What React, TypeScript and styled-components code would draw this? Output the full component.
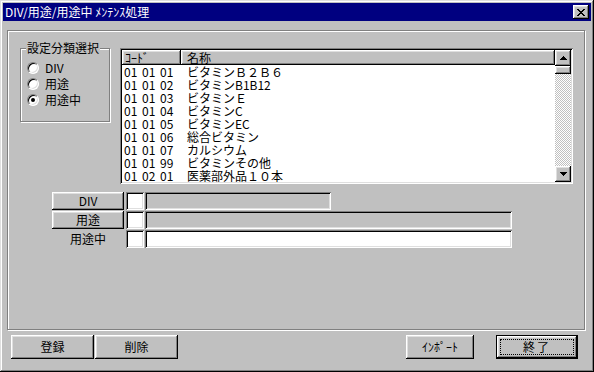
import React from "react";
import styled, { createGlobalStyle, css } from "styled-components";

const Global = createGlobalStyle`
  html, body { margin: 0; padding: 0; background: #c0c0c0; }
  body {
    font-family: "Noto Sans CJK JP", "Noto Sans", sans-serif;
    font-size: 12px;
    color: #000;
  }
  * { box-sizing: border-box; }
`;

const raised = css`
  background: #c0c0c0;
  box-shadow: inset -1px -1px #000, inset 1px 1px #fff, inset -2px -2px #808080,
    inset 2px 2px #dfdfdf;
`;

const sunken = css`
  box-shadow: inset 1px 1px #808080, inset -1px -1px #fff, inset 2px 2px #000,
    inset -2px -2px #dfdfdf;
`;

const etched = css`
  border: 1px solid #808080;
  box-shadow: inset 1px 1px #fff, 1px 1px #fff;
`;

const Window = styled.div`
  width: 594px;
  height: 372px;
  padding: 3px;
  display: flex;
  flex-direction: column;
  background: #c0c0c0;
  box-shadow: inset -1px -1px #000, inset 1px 1px #dfdfdf, inset -2px -2px #808080,
    inset 2px 2px #fff;
`;

const TitleBar = styled.div`
  height: 18px;
  flex-shrink: 0;
  background: #000080;
  color: #fff;
  display: flex;
  align-items: center;
  justify-content: space-between;
  padding: 0 2px 0 2px;
`;

const TitleText = styled.span`
  font-size: 12px;
  line-height: 18px;
  white-space: pre;
`;

const CloseButton = styled.button`
  ${raised};
  width: 16px;
  height: 14px;
  border: 0;
  padding: 0;
  display: flex;
  align-items: center;
  justify-content: center;
`;

const Body = styled.div`
  flex: 1;
  display: flex;
  flex-direction: column;
  padding: 9px 6px 0 4px;
`;

const Panel = styled.div`
  ${etched};
  height: 300px;
  padding: 17px 10px 0 12px;
  display: flex;
  flex-direction: column;
`;

const TopRow = styled.div`
  display: flex;
  align-items: flex-start;
  gap: 10px;
`;

const Group = styled.div`
  ${etched};
  position: relative;
  width: 90px;
  height: 74px;
  padding: 12px 0 0 6px;
  display: flex;
  flex-direction: column;
  gap: 3px;
`;

const Legend = styled.span`
  position: absolute;
  top: -8px;
  left: 5px;
  padding: 0 1px;
  line-height: 14px;
  background: #c0c0c0;
  white-space: nowrap;
`;

const RadioRow = styled.label`
  display: flex;
  align-items: center;
  gap: 6px;
  height: 13px;
  line-height: 13px;
`;

const RadioDot = styled.span<{ $checked?: boolean }>`
  position: relative;
  flex-shrink: 0;
  width: 12px;
  height: 12px;
  border-radius: 50%;
  background: #fff;
  border: 1px solid;
  border-color: #808080 #fff #fff #808080;
  box-shadow: inset 1px 1px #000, inset -1px -1px #dfdfdf;
  ${(p) =>
    p.$checked &&
    css`
      &::after {
        content: "";
        position: absolute;
        left: 3px;
        top: 3px;
        width: 4px;
        height: 4px;
        border-radius: 50%;
        background: #000;
      }
    `}
`;

const ListView = styled.div`
  ${sunken};
  width: 453px;
  height: 136px;
  padding: 2px;
  background: #fff;
  display: flex;
`;

const ListContent = styled.div`
  flex: 1;
  display: flex;
  flex-direction: column;
`;

const HeaderRow = styled.div`
  display: grid;
  grid-template-columns: 59px 1fr;
  height: 15px;
  flex-shrink: 0;
`;

const HeaderCell = styled.div<{ $indent: number }>`
  ${raised};
  padding-left: ${(p) => p.$indent}px;
  line-height: 15px;
  white-space: nowrap;
`;

const DataRow = styled.div`
  display: grid;
  grid-template-columns: 59px 1fr;
  height: 13px;
  line-height: 13px;
  white-space: pre;
`;

const CodeCell = styled.span`
  padding-left: 2px;
  word-spacing: 2px;
`;

const NameCell = styled.span`
  padding-left: 6px;
`;

const ScrollBar = styled.div`
  width: 16px;
  display: flex;
  flex-direction: column;
`;

const ScrollButton = styled.div`
  ${raised};
  width: 16px;
  height: 16px;
  flex-shrink: 0;
  display: flex;
  align-items: center;
  justify-content: center;
`;

const Thumb = styled.div`
  ${raised};
  width: 16px;
  height: 8px;
  flex-shrink: 0;
`;

const Track = styled.div`
  flex: 1;
  background-color: #fff;
  background-image: repeating-conic-gradient(#c0c0c0 0% 25%, #fff 0% 50%);
  background-size: 2px 2px;
`;

const Fields = styled.div`
  margin: 8px 0 0 32px;
  display: flex;
  flex-direction: column;
  gap: 1px;
`;

const FieldRow = styled.div`
  display: flex;
  align-items: center;
  height: 18px;
`;

const FieldButton = styled.button`
  ${raised};
  width: 72px;
  height: 18px;
  border: 0;
  padding: 0;
  font: inherit;
  line-height: 18px;
  color: #000;
`;

const FieldLabel = styled.span`
  width: 72px;
  text-align: center;
  line-height: 18px;
`;

const SmallBox = styled.div`
  ${sunken};
  width: 18px;
  height: 18px;
  margin-left: 2px;
  background: #fff;
`;

const TextField = styled.div<{ $w: number; $enabled?: boolean }>`
  ${sunken};
  width: ${(p) => p.$w}px;
  height: 18px;
  margin-left: 1px;
  background: ${(p) => (p.$enabled ? "#fff" : "#c0c0c0")};
`;

const BottomBar = styled.div`
  display: flex;
  align-items: center;
  margin-top: 5px;
  padding: 0 7px 0 4px;
`;

const ButtonGroup = styled.div<{ $gap: number }>`
  display: flex;
  gap: ${(p) => p.$gap}px;
`;

const Spacer = styled.div`
  flex: 1;
`;

const PushButton = styled.button<{ $w: number }>`
  ${raised};
  width: ${(p) => p.$w}px;
  height: 24px;
  border: 0;
  padding: 0;
  font: inherit;
  color: #000;
  line-height: 24px;
`;

const DefaultButton = styled.button<{ $w: number }>`
  position: relative;
  width: ${(p) => p.$w}px;
  height: 24px;
  border: 1px solid #000;
  padding: 0;
  font: inherit;
  color: #000;
  line-height: 22px;
  letter-spacing: 2px;
  background: #c0c0c0;
  box-shadow: inset -1px -1px #000, inset 1px 1px #fff, inset -2px -2px #808080,
    inset 2px 2px #dfdfdf;
  &::after {
    content: "";
    position: absolute;
    left: 3px;
    top: 3px;
    right: 3px;
    bottom: 3px;
    border: 1px dotted #000;
  }
`;

const CloseIcon = () => (
  <svg width="8" height="7" viewBox="0 0 8 7" shapeRendering="crispEdges">
    <path
      d="M0 0h2v1h-2zM6 0h2v1h-2zM1 1h2v1h-2zM5 1h2v1h-2zM2 2h4v1h-4zM3 3h2v1h-2zM2 4h4v1h-4zM1 5h2v1h-2zM5 5h2v1h-2zM0 6h2v1h-2zM6 6h2v1h-2z"
      fill="#000"
    />
  </svg>
);

const Arrow = ({ down }: { down?: boolean }) => (
  <svg width="7" height="4" viewBox="0 0 7 4" shapeRendering="crispEdges">
    <path
      d={
        down
          ? "M0 0h7v1h-7zM1 1h5v1h-5zM2 2h3v1h-3zM3 3h1v1h-1z"
          : "M3 0h1v1h-1zM2 1h3v1h-3zM1 2h5v1h-5zM0 3h7v1h-7z"
      }
      fill="#000"
    />
  </svg>
);

const rows: [string, string][] = [
  ["01 01 01", "ビタミンＢ２Ｂ６"],
  ["01 01 02", "ビタミンB1B12"],
  ["01 01 03", "ビタミンＥ"],
  ["01 01 04", "ビタミンC"],
  ["01 01 05", "ビタミンEC"],
  ["01 01 06", "総合ビタミン"],
  ["01 01 07", "カルシウム"],
  ["01 01 99", "ビタミンその他"],
  ["01 02 01", "医薬部外品１０本"],
];

export default function App() {
  return (
    <>
      <Global />
      <Window>
        <TitleBar>
          <TitleText>DIV/用途/用途中 ﾒﾝﾃﾝｽ処理</TitleText>
          <CloseButton>
            <CloseIcon />
          </CloseButton>
        </TitleBar>
        <Body>
          <Panel>
            <TopRow>
              <Group>
                <Legend>設定分類選択</Legend>
                <RadioRow>
                  <RadioDot />
                  DIV
                </RadioRow>
                <RadioRow>
                  <RadioDot />
                  用途
                </RadioRow>
                <RadioRow>
                  <RadioDot $checked />
                  用途中
                </RadioRow>
              </Group>
              <ListView>
                <ListContent>
                  <HeaderRow>
                    <HeaderCell $indent={3}>ｺｰﾄﾞ</HeaderCell>
                    <HeaderCell $indent={6}>名称</HeaderCell>
                  </HeaderRow>
                  {rows.map(([code, name]) => (
                    <DataRow key={code}>
                      <CodeCell>{code}</CodeCell>
                      <NameCell>{name}</NameCell>
                    </DataRow>
                  ))}
                </ListContent>
                <ScrollBar>
                  <ScrollButton>
                    <Arrow />
                  </ScrollButton>
                  <Thumb />
                  <Track />
                  <ScrollButton>
                    <Arrow down />
                  </ScrollButton>
                </ScrollBar>
              </ListView>
            </TopRow>
            <Fields>
              <FieldRow>
                <FieldButton>DIV</FieldButton>
                <SmallBox />
                <TextField $w={186} />
              </FieldRow>
              <FieldRow>
                <FieldButton>用途</FieldButton>
                <SmallBox />
                <TextField $w={367} />
              </FieldRow>
              <FieldRow>
                <FieldLabel>用途中</FieldLabel>
                <SmallBox />
                <TextField $w={367} $enabled />
              </FieldRow>
            </Fields>
          </Panel>
          <BottomBar>
            <ButtonGroup $gap={1}>
              <PushButton $w={83}>登録</PushButton>
              <PushButton $w={83}>削除</PushButton>
            </ButtonGroup>
            <Spacer />
            <ButtonGroup $gap={22}>
              <PushButton $w={68}>ｲﾝﾎﾟｰﾄ</PushButton>
              <DefaultButton $w={82}>終了</DefaultButton>
            </ButtonGroup>
          </BottomBar>
        </Body>
      </Window>
    </>
  );
}
